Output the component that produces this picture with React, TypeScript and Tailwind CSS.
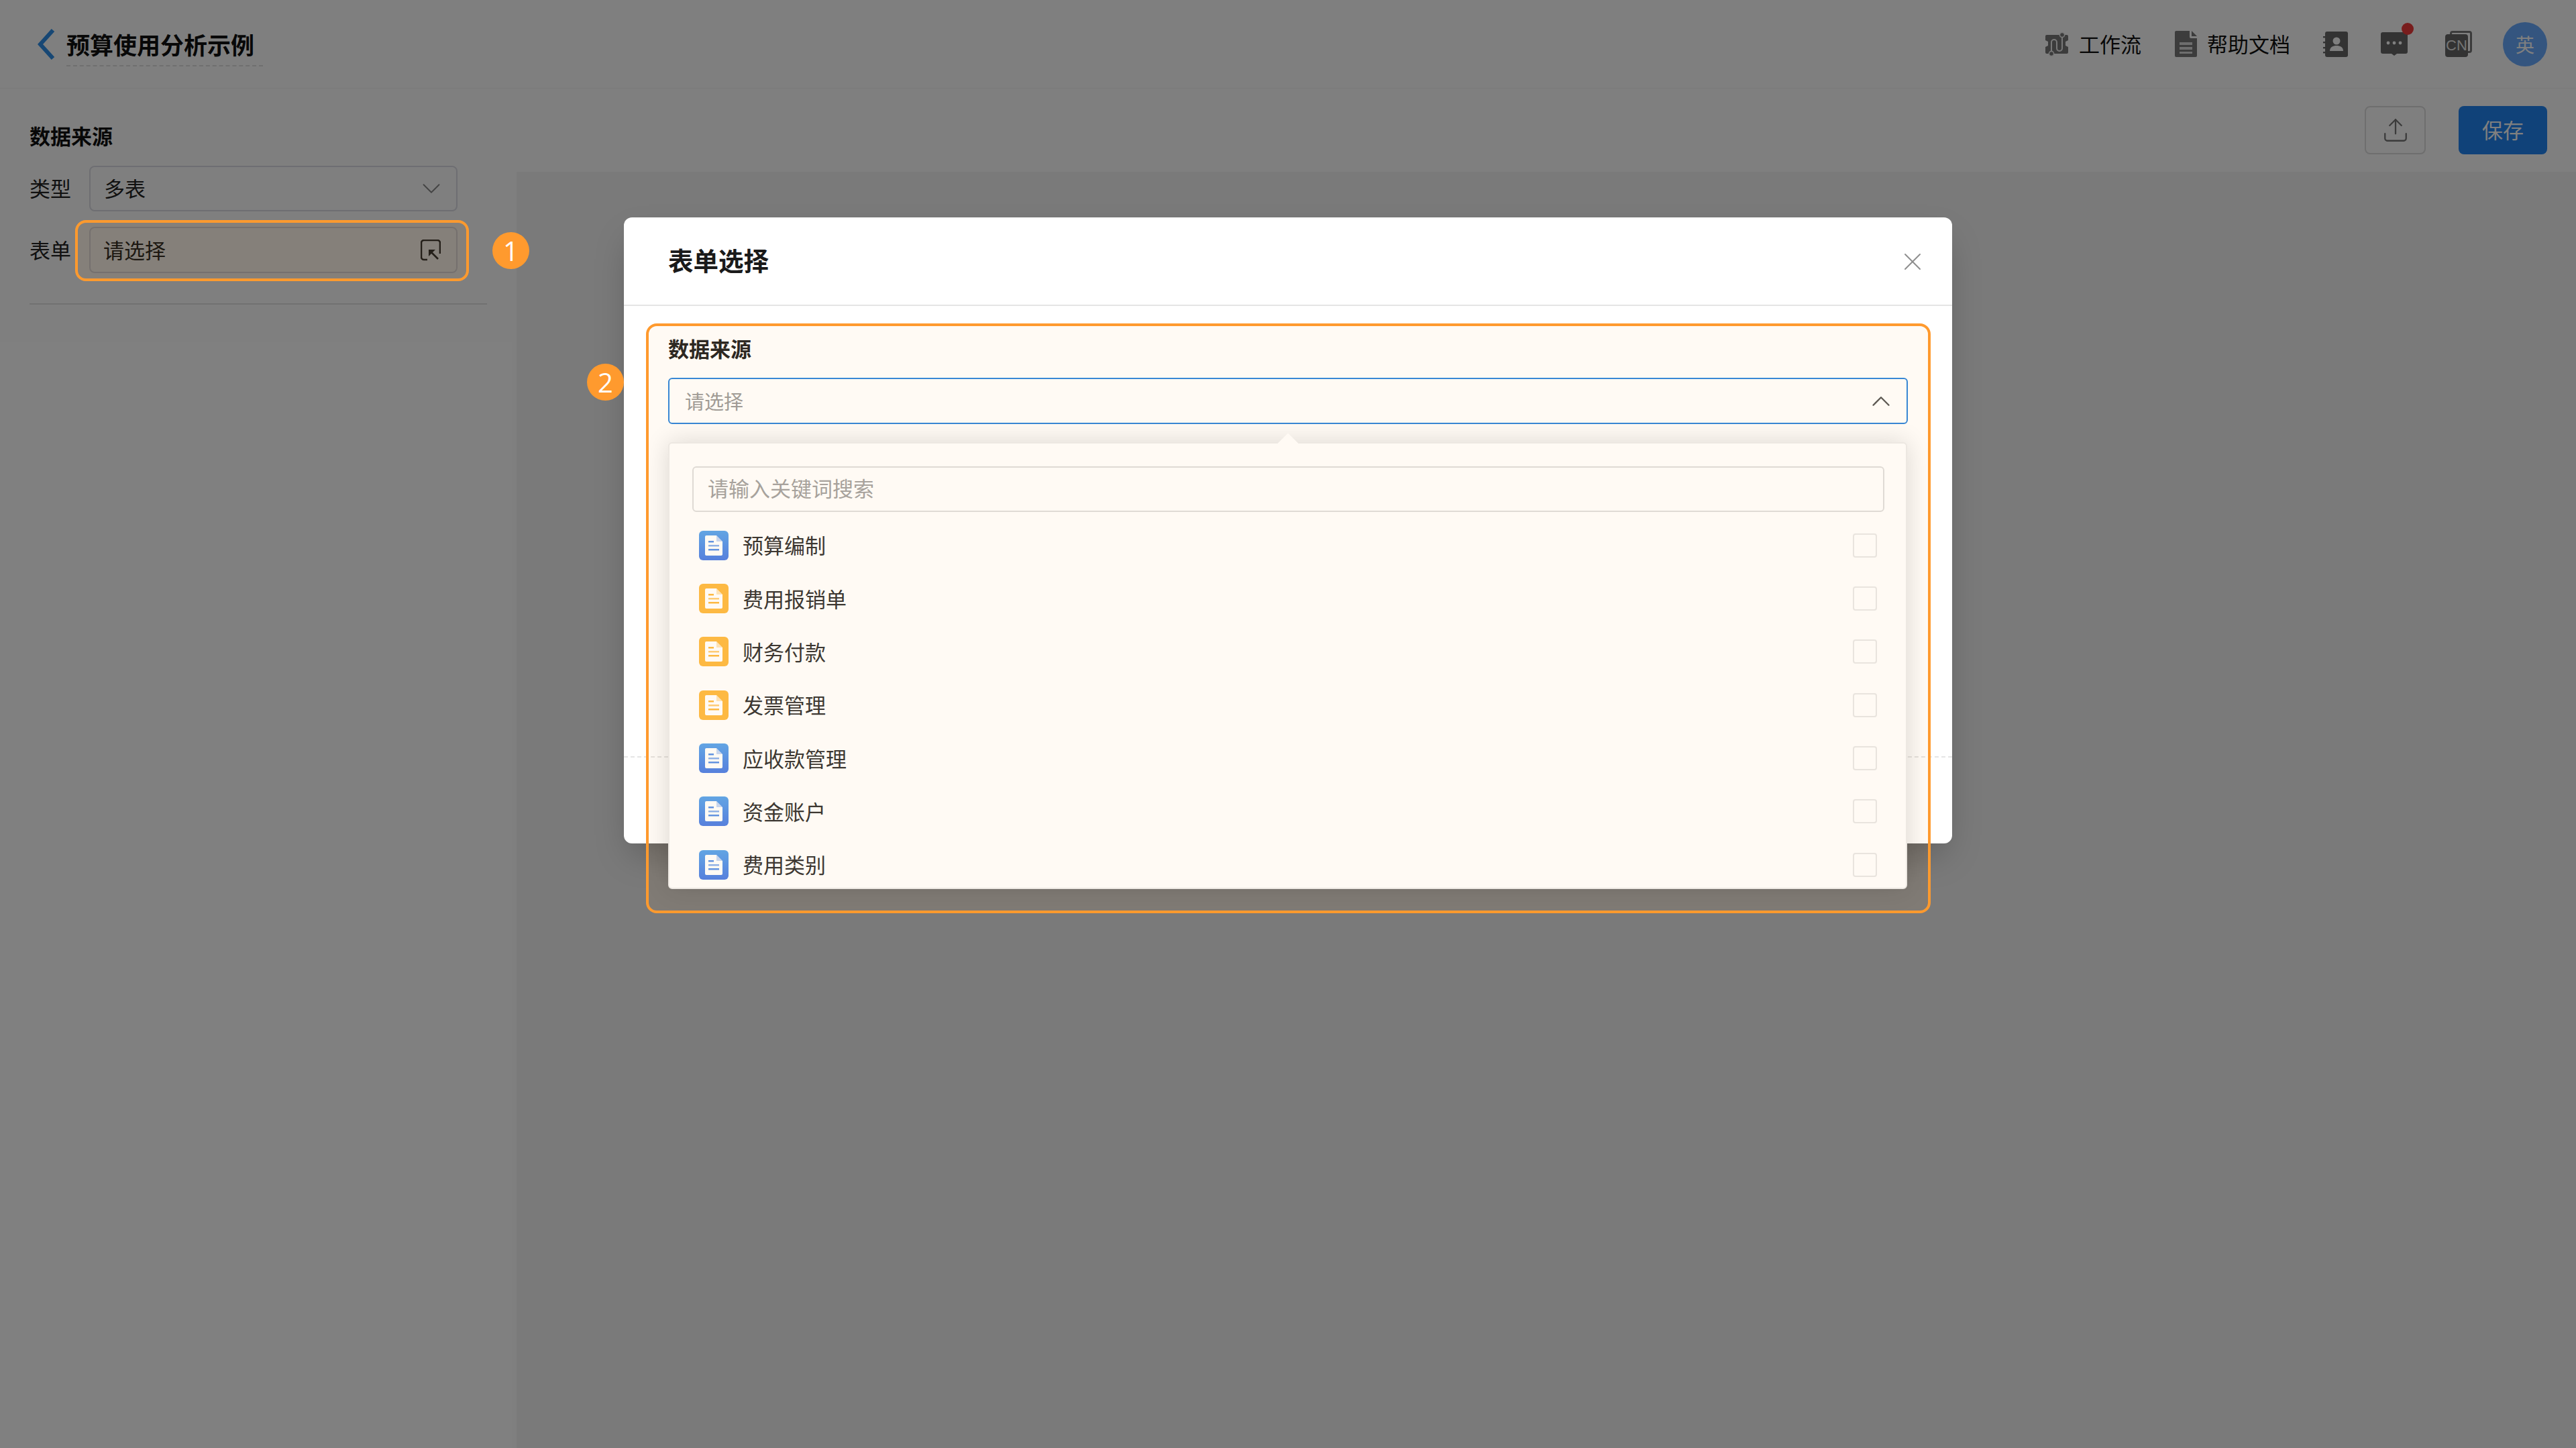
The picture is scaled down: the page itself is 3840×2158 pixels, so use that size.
import React from 'react';
import { ChevronDown, ChevronUp, Upload, X } from 'lucide-react';

const FORMS = [
  { name: '预算编制', tone: 'blue' },
  { name: '费用报销单', tone: 'orange' },
  { name: '财务付款', tone: 'orange' },
  { name: '发票管理', tone: 'orange' },
  { name: '应收款管理', tone: 'blue' },
  { name: '资金账户', tone: 'blue' },
  { name: '费用类别', tone: 'blue' },
];

const FormIcon = ({ tone }: { tone: string }) => {
  const line = tone === 'blue' ? '#5b94ea' : '#fdbb45';
  return (
    <div
      className={
        tone === 'blue'
          ? 'flex h-[44px] w-[44px] items-center justify-center rounded-[6px] bg-gradient-to-b from-[#5aa6ee] to-[#4f7fe6]'
          : 'flex h-[44px] w-[44px] items-center justify-center rounded-[6px] bg-[#fdbb45]'
      }
    >
      <svg width="26" height="30" viewBox="0 0 26 30">
        <path d="M2 0h15l9 9v19a2 2 0 0 1-2 2H2a2 2 0 0 1-2-2V2a2 2 0 0 1 2-2z" fill="#fff" />
        <path d="M17 0l9 9h-9z" fill={line} opacity="0.35" />
        <rect x="5" y="8" width="8" height="2.5" fill={line} />
        <rect x="5" y="14" width="16" height="2.5" fill={line} opacity="0.7" />
        <rect x="5" y="20" width="16" height="2.5" fill={line} />
      </svg>
    </div>
  );
};

const Badge = ({ n, className }: { n: number; className: string }) => (
  <div
    className={`absolute flex h-[55px] w-[55px] items-center justify-center rounded-full bg-[#ff9a2e] text-[40px] text-white ${className}`}
    style={{ fontFamily: '"Open Sans", sans-serif' }}
  >
    {n}
  </div>
);

const App: React.FC = () => {
  return (
    <div
      className="relative h-[2158px] w-[3840px] overflow-hidden bg-white text-[31px] text-[#222]"
      style={{ fontFamily: '"Noto Sans CJK SC", "Noto Sans", sans-serif' }}
    >
      {/* Header */}
      <header className="flex h-[132px] items-center justify-between border-b border-[#f4f4f4] pl-[56px] pr-[43px]">
        <div className="flex items-center">
          <svg width="26" height="46" viewBox="0 0 26 46" fill="none" stroke="#2e8fe8" strokeWidth="6" className="mr-[17px]">
            <path d="M23 2L4 23l19 21" />
          </svg>
          <div className="mt-[3px] border-b-2 border-dashed border-[#dedede] py-[6px] pr-[13px] text-[35px] font-bold leading-[50px] text-[#111]">
            预算使用分析示例
          </div>
        </div>
        <div className="flex items-center text-[#111]">
          <svg width="34" height="38" viewBox="0 0 34 38" className="mr-[16px]">
            <path d="M2 5h30a2 2 0 0 1 2 2v6l-4 2v6l4 2v8a2 2 0 0 1-2 2H2a2 2 0 0 1-2-2v-8l4-2v-6l-4-2V7a2 2 0 0 1 2-2z" fill="#787878" />
            <path d="M9 31V16a4 4 0 0 1 8 0v9a4 4 0 0 0 8 0V8" stroke="#f0f0f0" strokeWidth="2" fill="none" />
            <circle cx="25" cy="5" r="3.6" fill="#787878" stroke="#f0f0f0" strokeWidth="1.6" />
            <circle cx="9" cy="33" r="3.6" fill="#787878" stroke="#f0f0f0" strokeWidth="1.6" />
          </svg>
          <span className="mr-[50px]">工作流</span>
          <svg width="33" height="39" viewBox="0 0 33 39" className="mr-[15px]">
            <path d="M2 0h20v9a2 2 0 0 0 2 2h9v26a2 2 0 0 1-2 2H2a2 2 0 0 1-2-2V2a2 2 0 0 1 2-2z" fill="#787878" />
            <path d="M25 0l8 8h-8z" fill="#787878" />
            <rect x="7" y="17" width="19" height="4" fill="#fff" opacity="0.75" />
            <rect x="7" y="24" width="19" height="4" fill="#fff" opacity="0.75" />
            <rect x="7" y="31" width="19" height="3" fill="#fff" opacity="0.75" />
          </svg>
          <span className="mr-[49px]">帮助文档</span>
          <svg width="37" height="38" viewBox="0 0 37 38" className="mr-[49px]">
            <rect x="3" y="0" width="34" height="38" rx="3" fill="#666" />
            <rect x="0" y="7" width="6" height="2.4" fill="#666" />
            <rect x="0" y="15" width="6" height="2.4" fill="#666" />
            <rect x="0" y="23" width="6" height="2.4" fill="#666" />
            <rect x="0" y="30" width="6" height="2.4" fill="#666" />
            <circle cx="20" cy="14" r="5.5" fill="#fff" />
            <path d="M10 29c0-6 5-8 10-8s10 2 10 8z" fill="#fff" />
          </svg>
          <div className="relative mr-[56px] h-[35px] w-[40px]">
            <svg width="40" height="35" viewBox="0 0 40 35" className="block">
              <path d="M3 0h34a3 3 0 0 1 3 3v26a3 3 0 0 1-3 3H24l-4 3-4-3H3a3 3 0 0 1-3-3V3a3 3 0 0 1 3-3z" fill="#666" />
              <circle cx="11" cy="16" r="2.4" fill="#fff" />
              <circle cx="20" cy="16" r="2.4" fill="#fff" />
              <circle cx="29" cy="16" r="2.4" fill="#fff" />
            </svg>
            <div className="absolute -right-[9px] -top-[14px] h-[18px] w-[18px] rounded-full bg-[#f03a3a]" />
          </div>
          <div className="relative mr-[46px] h-[39px] w-[40px]">
            <div className="absolute left-[7px] top-0 h-[33px] w-[33px] rounded-[4px] border-[3px] border-[#777]" />
            <div className="absolute bottom-0 left-0 flex h-[34px] w-[34px] items-center justify-center rounded-[4px] bg-[#666] text-[22px] leading-none text-[#e8e8e8]" style={{ fontFamily: '"Liberation Sans", sans-serif' }}>
              CN
            </div>
          </div>
          <div className="flex h-[66px] w-[66px] items-center justify-center rounded-full bg-[#68aaff] text-[28px] text-white">英</div>
        </div>
      </header>

      <div className="flex h-[2026px]">
        {/* Left panel */}
        <aside className="w-[770px] pl-[44px] pt-[48px]">
          <div className="font-bold leading-[44px] text-[#111]">数据来源</div>
          <div className="mt-[23px] flex w-[638px] flex-col gap-[23px]">
            <div className="flex items-center">
              <span className="-mt-[2px] w-[89px] shrink-0">类型</span>
              <div className="flex h-[68px] flex-1 items-center justify-between rounded-[8px] border-2 border-[#dcdde4] pl-[20px] pr-[14px]">
                <span className="-mt-[2px]">多表</span>
                <ChevronDown size={46} strokeWidth={1} className="text-[#888]" />
              </div>
            </div>
            <div className="flex items-center">
              <span className="w-[89px] shrink-0">表单</span>
              <div className="flex h-[69px] flex-1 items-center justify-between rounded-[8px] border-2 border-[#dcdde4] pl-[19px] pr-[23px]">
                <span>请选择</span>
                <svg width="30" height="32" viewBox="0 0 30 32" fill="none" stroke="#333" strokeWidth="2.6">
                  <path d="M10 30H5a4 4 0 0 1-4-4V5a4 4 0 0 1 4-4h20a4 4 0 0 1 4 4v16" />
                  <path d="M26 29L13 16" />
                  <path d="M12 25v-10h10z" fill="#333" stroke="none" />
                </svg>
              </div>
            </div>
          </div>
          <div className="mt-[45px] h-[2px] w-[682px] bg-[#e2e2e2]" />
        </aside>

        {/* Right area */}
        <main className="flex flex-1 flex-col">
          <div className="flex h-[124px] items-center justify-end gap-[49px] pr-[43px]">
            <div className="flex h-[72px] w-[91px] items-center justify-center rounded-[8px] border-2 border-[#dcdcdc]">
              <Upload size={42} strokeWidth={1.3} className="text-[#777]" />
            </div>
            <div className="flex h-[72px] w-[132px] items-center justify-center rounded-[8px] bg-[#2084f2] text-white">
              <span className="-mt-[2px]">保存</span>
            </div>
          </div>
          <div className="flex-1 bg-[#f4f4f4]" />
        </main>
      </div>

      {/* Mask */}
      <div className="absolute inset-0 bg-black/50" />

      {/* Step 1 highlight */}
      <div className="absolute left-[112px] top-[328px] h-[91px] w-[587px] rounded-[16px] border-4 border-[#ff9a2e] bg-[#ff9a2e]/5" />
      <Badge n={1} className="left-[734px] top-[346px]" />

      {/* Modal */}
      <div className="absolute left-[930px] top-[324px] flex h-[933px] w-[1980px] flex-col rounded-[12px] bg-white shadow-2xl">
        <div className="flex h-[132px] items-center justify-between border-b-2 border-[#e5e5e5] pl-[66px] pr-[37px]">
          <span className="-mt-[3px] text-[37.5px] font-bold text-[#1a1a1a]">表单选择</span>
          <X size={44} strokeWidth={1.1} className="mt-[2px] text-[#8f8f8f]" />
        </div>
        <div className="flex-1 px-[66px] pt-[41px]">
          <div className="font-bold leading-[44px] text-[#222]">数据来源</div>
          <div className="mt-[22px] flex h-[69px] items-center justify-between rounded-[6px] border-2 border-[#2e86de] pl-[23px] pr-[15px] text-[29px] text-[#9b9b9b]">
            <span>请选择</span>
            <ChevronUp size={46} strokeWidth={1.2} className="text-[#555]" />
          </div>
        </div>
        <div className="h-[130px] border-t-2 border-dashed border-[#e5e5e5]" />

        {/* Dropdown */}
        <div className="absolute left-[66px] top-[335px] h-[666px] w-[1847px] rounded-[6px] border-2 border-[#ececec] bg-white pl-[34px] pr-[32px] pt-[34px] shadow-[0_0_36px_rgba(0,0,0,0.14)]">
          <div className="absolute -top-[11px] left-1/2 h-[22px] w-[22px] -translate-x-1/2 rotate-45 bg-white" />
          <div className="relative flex h-[68px] items-center rounded-[6px] border-2 border-[#dedede] pl-[21px] text-[#a3a3a3]">
            <span className="-mt-[3px]">请输入关键词搜索</span>
          </div>
          <div className="mt-[10px] flex flex-col">
            {FORMS.map(form => (
              <div key={form.name} className="flex h-[79.33px] items-center pl-[10px] pr-[11px]">
                <FormIcon tone={form.tone} />
                <span className="ml-[21px] flex-1 text-[#333]">{form.name}</span>
                <div className="h-[36px] w-[36px] rounded-[4px] border-2 border-[#e8e8e8]" />
              </div>
            ))}
          </div>
        </div>
      </div>

      {/* Step 2 highlight */}
      <div className="absolute left-[963px] top-[482px] h-[879px] w-[1915px] rounded-[16px] border-4 border-[#ff9a2e] bg-[#ff9a2e]/5" />
      <Badge n={2} className="left-[875px] top-[542px]" />
    </div>
  );
};

export default App;
